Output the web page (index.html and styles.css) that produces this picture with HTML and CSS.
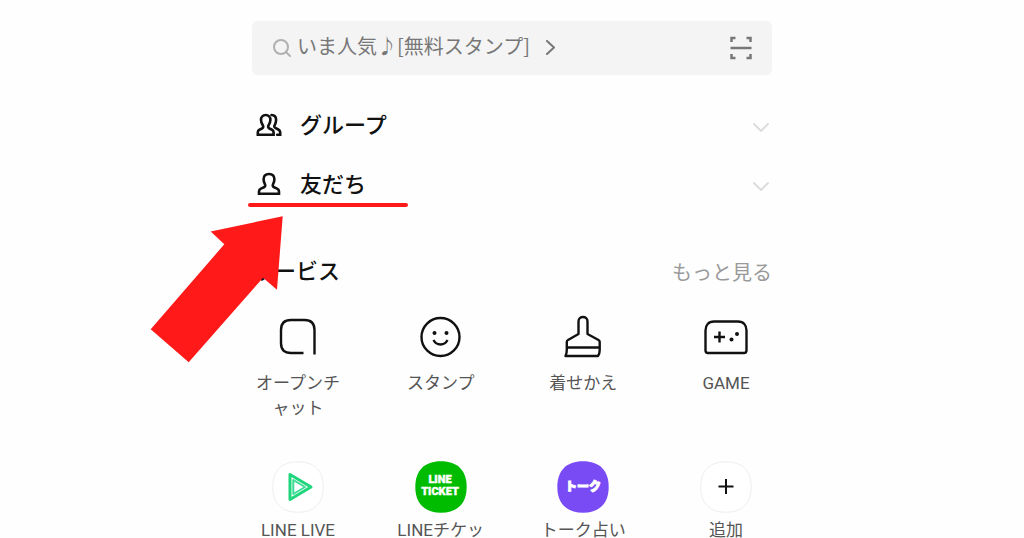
FILE: index.html
```html
<!DOCTYPE html>
<html lang="ja">
<head>
    <meta charset="UTF-8">
    <title>ホーム</title>
    <meta name="viewport" content="width=device-width, initial-scale=1.0">
    <link rel="stylesheet" href="styles.css">
</head>
<body>
    <main class="home">
        <div class="search-bar">
            <a class="search-link" href="#search">
                <svg class="search-icon" width="20" height="20" viewBox="0 0 20 20" aria-hidden="true">
                    <circle cx="9" cy="9" r="7"/>
                    <path d="M14 14l4 4"/>
                </svg>
                <span class="search-text">いま人気♪[無料スタンプ]</span>
                <svg class="search-arrow" width="12" height="16" viewBox="0 0 12 16" aria-hidden="true">
                    <path d="M2 1l7 6.500-7 6.500"/>
                </svg>
            </a>
            <button class="scan-btn" type="button" aria-label="QRコード">
                <svg width="22" height="24" viewBox="0 0 22 24" aria-hidden="true">
                    <path d="M1.500 6V2H5.500M16.500 2h4v4M1.500 18v4h4M16.500 22h4v-4M.5 12h21"/>
                </svg>
            </button>
        </div>

        <div class="lists">
            <button class="list-row" type="button">
                <svg class="person-icon" width="26" height="26" viewBox="0 0 26 26" aria-hidden="true">
                    <path d="M1.800 22.800v-2.600c0-1.200.5-2 1.600-2.500l2.600-1.200c1.300-.6 1.600-1.800.9-3C5.700 11.600 5 10.200 5 8c0-3.200 1.900-5 4.700-5s4.700 1.800 4.700 5c0 2.200-.7 3.600-1.900 5.500-.7 1.200-.4 2.400.9 3l2.600 1.200c1.100.5 1.600 1.300 1.600 2.500v2.600z"/>
                    <path d="M15.500 3c3 0 4.600 2 4.600 5 0 2.200-.5 3.600-1.500 5.300-.6 1.100-.4 2 .7 2.600l3 1.600c1.300.7 1.900 1.500 1.900 2.700v2.600h-3"/>
                </svg>
                <span class="row-name">グループ</span>
                <svg class="chevron" width="18" height="12" viewBox="0 0 18 12" aria-hidden="true">
                    <path d="M2 2l7 7 7-7"/>
                </svg>
            </button>
            <button class="list-row" type="button">
                <svg class="person-icon" width="26" height="26" viewBox="0 0 26 26" aria-hidden="true">
                    <path d="M3 22.800v-2.400c0-1.300.6-2.200 1.900-2.800l3.100-1.400c1.300-.6 1.600-1.800.9-3C7.900 11.500 7.600 10.200 7.600 8.300c0-3.300 2.200-5.300 5.400-5.300s5.400 2 5.400 5.300c0 1.900-.3 3.200-1.300 4.900-.7 1.200-.4 2.400.9 3l3.100 1.400c1.300.6 1.900 1.500 1.900 2.800v2.400z"/>
                </svg>
                <span class="row-name">友だち</span>
                <svg class="chevron" width="18" height="12" viewBox="0 0 18 12" aria-hidden="true">
                    <path d="M2 2l7 7 7-7"/>
                </svg>
            </button>

            <!-- red marks over the friends row -->
            <div class="mark-line"></div>
            <svg class="mark-arrow" width="134" height="148" viewBox="0 0 134 148" aria-hidden="true">
                <path d="M.7 113.300L74.300 28.300 60.700 15.500 132.700.3 127 73.700 113 61.800 38.700 146.300z"/>
            </svg>
        </div>

        <section class="services">
            <div class="services-head">
                <h2>サービス</h2>
                <a href="#more">もっと見る</a>
            </div>

            <div class="service-list">
                <a class="service" href="#openchat">
                    <svg class="service-icon" width="52" height="52" viewBox="0 0 52 52" aria-hidden="true">
                        <path d="M31.500 42H19c-6.500 0-10-3.500-10-10V19c0-6.500 3.500-10 10-10h13.500c6.500 0 10 3.500 10 10v24.500"/>
                    </svg>
                    <span>オープンチャット</span>
                </a>
                <a class="service" href="#stamp">
                    <svg class="service-icon" width="52" height="52" viewBox="0 0 52 52" aria-hidden="true">
                        <circle cx="25.500" cy="26" r="19"/>
                        <path d="M18.500 29c3 6 11 6 14 0"/>
                        <circle class="dot" cx="19.500" cy="22" r="2"/>
                        <circle class="dot" cx="31.500" cy="22" r="2"/>
                    </svg>
                    <span>スタンプ</span>
                </a>
                <a class="service" href="#theme">
                    <svg class="service-icon" width="52" height="52" viewBox="0 0 52 52" aria-hidden="true">
                        <path d="M21.500 23V10.500c0-6 9-6 9 0V23l11 6c1 .6 1.200 1 1.200 2v8c0 3-.6 4.500-1.700 6H8.500c1-2 1.300-4 1.300-6.500V31c0-1 .2-1.500 1.200-2zM9.500 36.500h33"/>
                    </svg>
                    <span>着せかえ</span>
                </a>
                <a class="service" href="#game">
                    <svg class="service-icon" width="52" height="52" viewBox="0 0 52 52" aria-hidden="true">
                        <path d="M14 10.500h24c5.500 0 8.500 3.500 8.500 9V39.500c0 1.800-.7 2.500-2.500 2.500H8c-1.800 0-2.500-.7-2.500-2.500v-20c0-5.500 3-9 8.500-9zM19.500 20.500v11M14 26h11"/>
                        <circle class="dot" cx="31.500" cy="28.500" r="2"/>
                        <circle class="dot" cx="37" cy="23" r="2"/>
                    </svg>
                    <span>GAME</span>
                </a>
            </div>

            <div class="service-list apps">
                <a class="service" href="#live">
                    <svg class="app-icon" width="52" height="52" viewBox="0 0 52 52" aria-hidden="true">
                        <path class="app-border" d="M26 .8C42.500 .8 51.200 9.500 51.200 26S42.500 51.200 26 51.200.8 42.500.8 26 9.500.8 26 .8z"/>
                        <path class="live-outer" d="M18 13.500v25L39 26z"/>
                        <path class="live-inner" d="M21.300 19v14L33 26z"/>
                    </svg>
                    <span>LINE LIVE</span>
                </a>
                <a class="service" href="#ticket">
                    <svg class="app-icon" width="52" height="52" viewBox="0 0 52 52" aria-hidden="true">
                        <path fill="#00bc00" d="M26 .3C42.500 .3 51.700 9.500 51.700 26S42.500 51.700 26 51.700.3 42.500.3 26 9.500.3 26 .3z"/>
                        <text class="ticket-text" x="25" y="22">LINE</text>
                        <text class="ticket-text" x="25" y="34">TICKET</text>
                    </svg>
                    <span>LINEチケット</span>
                </a>
                <a class="service" href="#fortune">
                    <svg class="app-icon" width="52" height="52" viewBox="0 0 52 52" aria-hidden="true">
                        <path fill="#784bf5" d="M26 .3C42.500 .3 51.700 9.500 51.700 26S42.500 51.700 26 51.700.3 42.500.3 26 9.500.3 26 .3z"/>
                        <text class="talk-text" x="26" y="30">トーク</text>
                    </svg>
                    <span>トーク占い</span>
                </a>
                <a class="service" href="#add">
                    <svg class="app-icon" width="52" height="52" viewBox="0 0 52 52" aria-hidden="true">
                        <path class="app-border" d="M26 .8C42.500 .8 51.200 9.500 51.200 26S42.500 51.200 26 51.200.8 42.500.8 26 9.500.8 26 .8z"/>
                        <path class="plus" d="M26 18v15M18.500 25.500h15"/>
                    </svg>
                    <span>追加</span>
                </a>
            </div>
        </section>
    </main>
</body>
</html>
```
FILE: styles.css
```css
* {
    box-sizing: border-box;
}

body {
    margin: 0;
    background: #fefefe;
    color: #111;
    font-family: Roboto, "Noto Sans CJK JP", sans-serif;
}

a {
    color: inherit;
    text-decoration: none;
}

button {
    border: none;
    background: none;
    padding: 0;
    color: inherit;
    font-family: inherit;
    cursor: pointer;
}

svg {
    display: block;
    flex-shrink: 0;
    fill: none;
    stroke-linecap: round;
    stroke-linejoin: round;
}

.home {
    max-width: 520px;
    margin: 0 auto;
    padding-top: 21px;
}

.search-bar {
    display: flex;
    align-items: center;
    justify-content: space-between;
    height: 54px;
    padding: 0 20px;
    border-radius: 6px;
    background: #f4f4f4;
}

.search-link {
    display: flex;
    align-items: center;
    gap: 5px;
    color: #777;
    font-family: "Noto Sans CJK JP", sans-serif;
    font-size: 20px;
    line-height: 30px;
}

.search-text {
    padding-bottom: 4px;
}

.search-icon {
    stroke: #b0b0b0;
    stroke-width: 2;
}

.search-arrow {
    margin-left: 10px;
    stroke: #777;
    stroke-width: 2;
}

.scan-btn svg {
    stroke: #777;
    stroke-width: 2.500;
    stroke-linecap: butt;
    stroke-linejoin: miter;
}

.lists {
    position: relative;
    margin-top: 20px;
}

.list-row {
    display: flex;
    align-items: center;
    width: 100%;
    height: 59px;
    padding: 0 2px 0 4px;
    text-align: left;
}

.person-icon {
    stroke: #111;
    stroke-width: 2.600;
    stroke-linejoin: miter;
}

.row-name {
    flex: 1;
    margin-left: 18px;
    padding-bottom: 4px;
    font-size: 22px;
    font-weight: 500;
}

.chevron {
    margin-top: 6px;
    stroke: #ddd;
    stroke-width: 2;
}

.mark-line {
    position: absolute;
    top: 108px;
    left: -4px;
    width: 160px;
    height: 4px;
    border-radius: 2px;
    background: #ff1919;
}

.mark-arrow {
    position: absolute;
    top: 121px;
    left: -102px;
    fill: #ff1919;
}

.services {
    margin-top: 42px;
}

.services-head {
    display: flex;
    align-items: center;
    justify-content: space-between;
    height: 32px;
}

.services-head h2 {
    margin: 0;
    padding-bottom: 4px;
    font-size: 22px;
    font-weight: 500;
}

.services-head a {
    color: #999;
    font-size: 20px;
}

.service-list {
    display: flex;
    justify-content: space-between;
    margin-top: 24px;
}

.service {
    display: flex;
    flex-direction: column;
    align-items: center;
    gap: 8px;
    width: 92px;
    color: #555;
    font-size: 17px;
    line-height: 25px;
    text-align: center;
    line-break: anywhere;
}

.service-icon {
    stroke: #111;
    stroke-width: 2.400;
    stroke-linecap: butt;
}

.service-icon .dot {
    fill: #111;
    stroke: none;
}

.apps {
    margin-top: 40px;
}

.apps .service {
    gap: 5px;
}

.app-border {
    fill: #fff;
    stroke: #eee;
}

.live-outer {
    stroke: #1fd67c;
    stroke-width: 3;
}

.live-inner {
    stroke: #3ddc97;
    stroke-width: 2;
}

.ticket-text,
.talk-text {
    fill: #fff;
    stroke: #fff;
    text-anchor: middle;
    font-weight: 900;
}

.ticket-text {
    stroke-width: 0.400;
    font-size: 11px;
}

.talk-text {
    stroke-width: 1;
    font-size: 12px;
}

.plus {
    stroke: #111;
    stroke-width: 2;
    stroke-linecap: butt;
}
```
